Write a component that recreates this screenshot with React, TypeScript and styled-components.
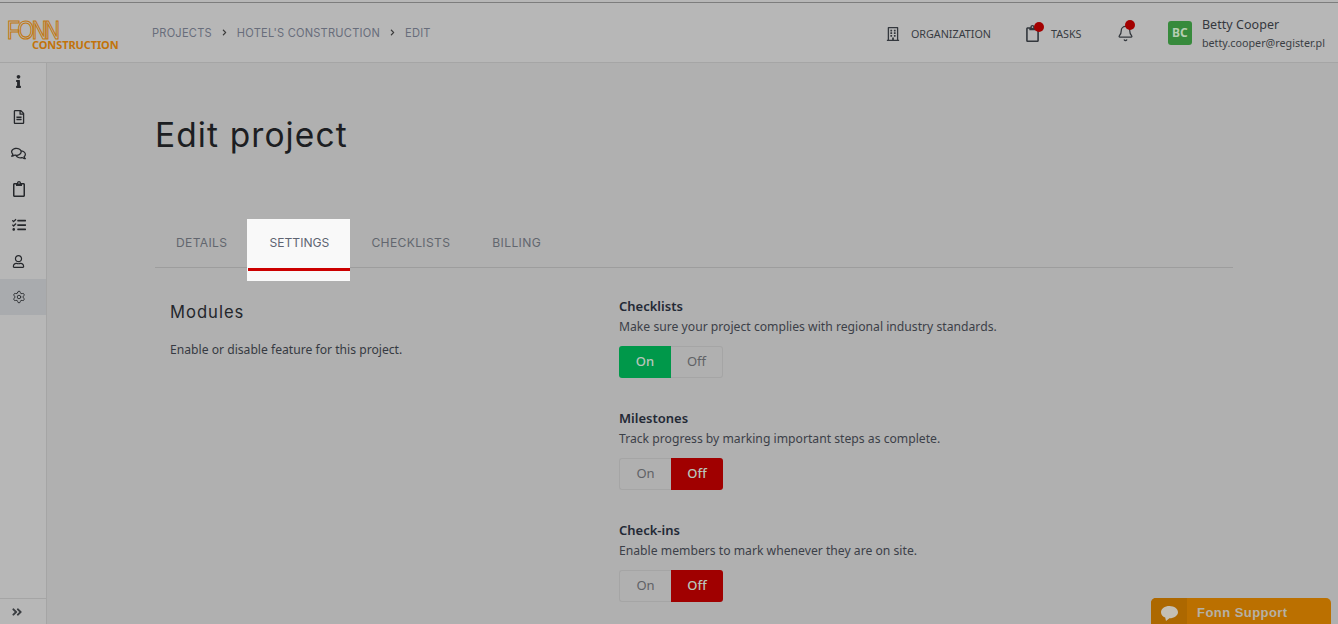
import React from "react";
import styled, { createGlobalStyle } from "styled-components";
import { Bell, Settings } from "lucide-react";
import { FaInfo, FaAngleDoubleRight, FaChevronRight, FaRegBuilding, FaRegClipboard, FaRegFileAlt, FaRegComments, FaTasks, FaRegUser } from "react-icons/fa";

const Global = createGlobalStyle`
  html, body { margin: 0; padding: 0; height: 624px; overflow: hidden; background: #b0b0b0; }
  * { box-sizing: border-box; }
`;
const sans = `"Noto Sans", "Open Sans", sans-serif`;
const wide = `Inter, "Liberation Sans", sans-serif`;

const Page = styled.div`
  height: 624px; display: flex; flex-direction: column; position: relative; overflow: hidden;
  font-family: ${sans}; color: #23272e;
`;
const TopBar = styled.header`
  height: 63px; flex: none; display: flex; align-items: center; background: #b7b7b7;
  border-top: 2px solid #b7b7b7; box-shadow: inset 0 1px 0 #7d7d7d; border-bottom: 1px solid #a5a5a5;
  padding: 3px 13px 0 7px;
`;
const Logo = styled.div`
  width: 145px; height: 30px; flex: none; display: flex; flex-direction: column; margin-top: 5px;
`;
const LogoMark = styled.span`
  font: 400 26px/18px "Liberation Sans", sans-serif; letter-spacing: -3px; color: transparent;
  -webkit-text-stroke: 1.2px #c2780f; height: 18px; transform: scaleX(0.82); transform-origin: left center;
`;
const LogoSub = styled.span`
  font: 700 11px/12px "Noto Sans", sans-serif; color: #c2730a; margin-left: 25px; letter-spacing: -0.1px;
`;
const Crumbs = styled.nav`
  display: flex; align-items: center; font: 400 11.1px/14px ${wide}; color: #686d7b; margin-top: -2px; letter-spacing: 0.22px;
`;
const CrumbSep = styled.span`
  display: flex; width: 25px; justify-content: center; color: #3a3a3a; font-size: 7px;
`;
const Spacer = styled.div`flex: 1;`;
const NavItem = styled.div<{ $w: number }>`
  display: flex; align-items: center; width: ${p => p.$w}px; font: 400 10.75px/14px ${sans}; color: #383c42;
  position: relative;
`;
const Dot = styled.span<{ $l: number; $t: number }>`
  position: absolute; width: 10px; height: 10px; border-radius: 50%; background: #a30000;
  left: ${p => p.$l}px; top: ${p => p.$t}px;
`;
const NavIcon = styled.span<{ $w: number }>`
  display: flex; width: ${p => p.$w}px; flex: none; color: #33373d;
`;
const Avatar = styled.div`
  width: 24px; height: 24px; border-radius: 3px; background: #378a3c; color: #b6cdb2; flex: none;
  font: 700 12px/24px ${sans}; text-align: center; margin-right: 10px;
`;
const UserBox = styled.div`display: flex; align-items: center; margin-top: -1px;`;
const UserName = styled.div`font: 400 12.5px/17px ${sans}; color: #34383e; letter-spacing: 0.05px;`;
const UserMail = styled.div`font: 400 10.75px/15px ${sans}; color: #3a3e44; margin-top: 3px;`;
const Body = styled.div`flex: 1; display: flex; min-height: 0;`;
const Side = styled.aside`
  width: 47px; flex: none; background: #b7b7b7; border-right: 1px solid #a5a5a5; display: flex; flex-direction: column;
`;
const SideItem = styled.div<{ $active?: boolean }>`
  height: 36px; display: flex; align-items: center; justify-content: center; color: #26282c;
  padding-right: 9px; background: ${p => (p.$active ? "#a9abae" : "transparent")};
`;
const SideFoot = styled.div`
  margin-top: auto; height: 26px; border-top: 1px solid #a5a5a5; display: flex; align-items: center;
  justify-content: center; color: #3b3e42; padding-right: 12px;
`;
const Main = styled.main`flex: 1; padding: 0 105px 0 108px; min-width: 0;`;
const Title = styled.h1`
  margin: 50px 0 0; font: 400 33.5px/44px ${wide}; color: #1c1e22; letter-spacing: 1.1px;
`;
const Tabs = styled.div`
  display: flex; margin-top: 62px; height: 49px; border-bottom: 1px solid #9d9d9d;
`;
const Tab = styled.div<{ $active?: boolean }>`
  height: ${p => (p.$active ? "52px" : "49px")}; padding: 0 21px; display: flex; align-items: flex-start;
  padding-top: 16px; font: 400 12.1px/15px ${wide}; letter-spacing: ${p => (p.$active ? "0.02px" : "0.35px")};
  color: ${p => (p.$active ? "#5e6472" : "#62666e")};
  background: ${p => (p.$active ? "#f9f9f9" : "transparent")};
  border-bottom: ${p => (p.$active ? "3px solid #cc0000" : "0")};
  box-shadow: ${p => (p.$active ? "-1px 0 0 #f9f9f9, 0 10px 0 #f9f9f9, -1px 10px 0 #f9f9f9" : "none")};
`;
const Content = styled.div`display: flex; padding-top: 26px;`;
const Left = styled.div`width: 464px; flex: none; padding-left: 15px;`;
const LeftTitle = styled.h2`
  margin: 7px 0 0; font: 400 16.6px/22px ${wide}; color: #24272c; letter-spacing: 1px;
`;
const LeftText = styled.p`margin: 18px 0 0; font: 400 12.15px/18px ${sans}; color: #363a42;`;
const Right = styled.div`display: flex; flex-direction: column; gap: 32px; padding-top: 4px;`;
const Feature = styled.section`height: 80px;`;
const FeatureName = styled.div`font: 600 13px/17px ${sans}; color: #232935;`;
const FeatureText = styled.div`font: 400 12.18px/17px ${sans}; color: #3c4048; margin-top: 3px;`;
const Toggle = styled.div`display: flex; width: 104px; height: 32px; margin-top: 11px;`;
const ToggleBtn = styled.div<{ $state: "on" | "off" | "idle"; $side: "l" | "r" }>`
  width: 52px; display: flex; align-items: center; justify-content: center; padding-bottom: 2px;
  font: ${p => (p.$state === "idle" ? 400 : 500)} 13px/16px ${sans};
  background: ${p => (p.$state === "on" ? "#00984a" : p.$state === "off" ? "#a00000" : "transparent")};
  color: ${p => (p.$state === "idle" ? "#5f6165" : "#b9c5bc")};
  border: ${p => (p.$state === "idle" ? "1px solid #a5a5a5" : "0")};
  border-${p => (p.$side === "l" ? "right" : "left")}: 0;
  border-radius: ${p => (p.$side === "l" ? "3px 0 0 3px" : "0 3px 3px 0")};
`;
const Support = styled.div`
  position: absolute; right: 7px; bottom: 0; width: 180px; height: 26px; background: #bb7000;
  border-radius: 5px 5px 0 0; display: flex; align-items: center; overflow: hidden; padding-top: 3px;
  font: 700 13px/16px "Liberation Sans", sans-serif; color: #b5b0a6; letter-spacing: 0.45px;
`;
const SupportIcon = styled.div`
  width: 36px; height: 26px; margin-top: -3px; background: #ad6800; display: flex; align-items: center; justify-content: center;
  margin-right: 10px; padding-top: 5px;
`;

const features = [
  { name: "Checklists", text: "Make sure your project complies with regional industry standards.", on: true },
  { name: "Milestones", text: "Track progress by marking important steps as complete.", on: false },
  { name: "Check-ins", text: "Enable members to mark whenever they are on site.", on: false },
];

export default function App() {
  return (
    <Page>
      <Global />
      <TopBar>
        <Logo>
          <LogoMark>FONN</LogoMark>
          <LogoSub>CONSTRUCTION</LogoSub>
        </Logo>
        <Crumbs>
          PROJECTS<CrumbSep><FaChevronRight /></CrumbSep>HOTEL'S CONSTRUCTION<CrumbSep><FaChevronRight /></CrumbSep>EDIT
        </Crumbs>
        <Spacer />
        <NavItem $w={138}>
          <NavIcon $w={25}><FaRegBuilding size={14} /></NavIcon>ORGANIZATION
        </NavItem>
        <NavItem $w={93}>
          <NavIcon $w={27}><FaRegClipboard size={17} /></NavIcon>TASKS
          <Dot $l={10} $t={-3} />
        </NavItem>
        <NavItem $w={51}>
          <NavIcon $w={20}><Bell size={17} strokeWidth={1.8} /></NavIcon>
          <Dot $l={8} $t={-5} />
        </NavItem>
        <UserBox>
          <Avatar>BC</Avatar>
          <div>
            <UserName>Betty Cooper</UserName>
            <UserMail>betty.cooper@register.pl</UserMail>
          </div>
        </UserBox>
      </TopBar>
      <Body>
        <Side>
          <SideItem><FaInfo size={13} /></SideItem>
          <SideItem><FaRegFileAlt size={14} /></SideItem>
          <SideItem><FaRegComments size={15} /></SideItem>
          <SideItem><FaRegClipboard size={16} /></SideItem>
          <SideItem><FaTasks size={14} /></SideItem>
          <SideItem><FaRegUser size={13} /></SideItem>
          <SideItem $active><Settings size={14} strokeWidth={1.5} /></SideItem>
          <SideFoot><FaAngleDoubleRight size={12} /></SideFoot>
        </Side>
        <Main>
          <Title>Edit project</Title>
          <Tabs>
            <Tab>DETAILS</Tab>
            <Tab $active>SETTINGS</Tab>
            <Tab>CHECKLISTS</Tab>
            <Tab>BILLING</Tab>
          </Tabs>
          <Content>
            <Left>
              <LeftTitle>Modules</LeftTitle>
              <LeftText>Enable or disable feature for this project.</LeftText>
            </Left>
            <Right>
              {features.map(f => (
                <Feature key={f.name}>
                  <FeatureName>{f.name}</FeatureName>
                  <FeatureText>{f.text}</FeatureText>
                  <Toggle>
                    <ToggleBtn $side="l" $state={f.on ? "on" : "idle"}>On</ToggleBtn>
                    <ToggleBtn $side="r" $state={f.on ? "idle" : "off"}>Off</ToggleBtn>
                  </Toggle>
                </Feature>
              ))}
            </Right>
          </Content>
        </Main>
      </Body>
      <Support>
        <SupportIcon>
          <svg width="17" height="16" viewBox="0 0 17 16" fill="#c4bfb4">
            <path d="M8.500 0C3.800 0 0 2.700 0 6.200c0 2.300 1.700 4.300 4.200 5.400L5 15l3.400-2.800h.1c4.700 0 8.500-2.700 8.500-6S13.200 0 8.500 0z" />
          </svg>
        </SupportIcon>
        Fonn Support
      </Support>
    </Page>
  );
}
